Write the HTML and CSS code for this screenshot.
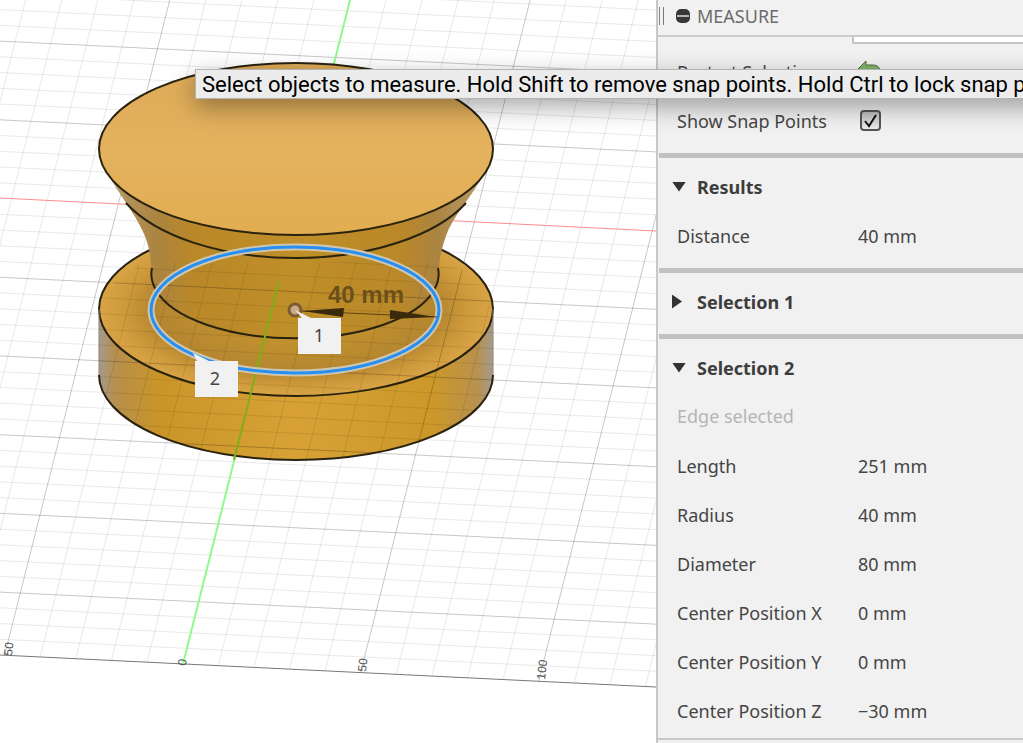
FILE: index.html
```html
<!DOCTYPE html>
<html lang="en">
<head>
    <meta charset="UTF-8">
    <meta name="viewport" content="width=device-width, initial-scale=1.0">
    <title>Measure</title>
    <link rel="stylesheet" href="styles.css">
</head>
<body>
    <main class="workspace">
        <svg class="canvas" viewBox="0 0 656 743" preserveAspectRatio="xMinYMin slice" role="img" aria-label="Model view">
            <defs>
                <linearGradient id="topFace" x1="0" y1="0" x2="0" y2="1">
                    <stop offset="0" stop-color="#dcaa57"/>
                    <stop offset="0.5" stop-color="#e4b25f"/>
                    <stop offset="1" stop-color="#e2ad50"/>
                </linearGradient>
                <linearGradient id="neck">
                    <stop offset="0" stop-color="#b59a68"/>
                    <stop offset="0.12" stop-color="#ab8440"/>
                    <stop offset="0.22" stop-color="#ba8828"/>
                    <stop offset="0.5" stop-color="#bf8f29"/>
                    <stop offset="0.78" stop-color="#ba8828"/>
                    <stop offset="0.88" stop-color="#ab8440"/>
                    <stop offset="1" stop-color="#b59a68"/>
                </linearGradient>
                <linearGradient id="side">
                    <stop offset="0" stop-color="#a59b8c"/>
                    <stop offset="0.04" stop-color="#b68f4e"/>
                    <stop offset="0.15" stop-color="#c99528"/>
                    <stop offset="0.5" stop-color="#d7a136"/>
                    <stop offset="0.85" stop-color="#cc982a"/>
                    <stop offset="0.96" stop-color="#b8914e"/>
                    <stop offset="1" stop-color="#a59b8c"/>
                </linearGradient>
                <radialGradient id="baseFace">
                    <stop offset="0.4" stop-color="#c0902e"/>
                    <stop offset="0.72" stop-color="#b48630"/>
                    <stop offset="0.88" stop-color="#cf9a3b"/>
                    <stop offset="1" stop-color="#d9a446"/>
                </radialGradient>
                <clipPath id="lowerBody">
                    <path d="M99 309V375A197 85 0 0 0 493 375V309C490 290 470 268 439 262H151C122 268 102 290 99 309Z"/>
                </clipPath>
            </defs>

            <g id="grid">
                <path class="minor"/>
                <path class="major"/>
            </g>
            <path class="edge-line" d="M0 655L656 687"/>
            <path class="axis-x" d="M0 198L656 231"/>
            <path class="axis-y" d="M183 664L350 0"/>

            <g class="ruler">
                <text transform="translate(12 656) rotate(-84)">50</text>
                <text transform="translate(186 666) rotate(-84)">0</text>
                <text transform="translate(366 672) rotate(-84)">50</text>
                <text transform="translate(545 680) rotate(-84)">100</text>
            </g>

            <!-- base disc -->
            <path fill="url(#side)" d="M99 309V375A197 85 0 0 0 493 375V309Z"/>
            <ellipse fill="url(#baseFace)" cx="296" cy="309" rx="197" ry="87"/>
            <path class="outline" d="M99 375A197 85 0 0 0 493 375"/>
            <path class="outline" d="M152 249C118 265 99 287 99 309A197 87 0 0 0 493 309C493 287 474 265 440 249"/>
            <path class="outline soft" d="M99 309V375M493 309V375"/>

            <!-- neck and flared top -->
            <path fill="url(#neck)" d="M112 181C124 201 143 225 148 245C151 256 151 266 152 275A143 63 0 0 0 438 275C439 262 441 250 446 236C452 218 468 201 480 181Z"/>
            <path class="outline" d="M152 268A143 63 0 0 0 156 290A143 63 0 0 0 434 290A143 63 0 0 0 438 268"/>
            <path class="outline" d="M126 203C156 236 221 258 296 258S437 235 466 203"/>
            <ellipse class="outline top" cx="296" cy="149" rx="197" ry="86"/>

            <!-- ground plane showing through the lower half -->
            <g clip-path="url(#lowerBody)">
                <use href="#grid"/>
            </g>
            <path class="axis-y through" d="M234 460L279 281"/>

            <!-- selected edge and dimension -->
            <ellipse class="edge-halo" cx="295" cy="310" rx="144" ry="63"/>
            <ellipse class="edge-selected" cx="295" cy="310" rx="144" ry="63"/>
            <g class="dimension">
                <path class="leader" d="M302 311L437 317"/>
                <path d="M302 311L344 308L343 317ZM390 310L436 317L390 319Z"/>
                <text x="328" y="303">40 mm</text>
            </g>
            <circle class="center-point" cx="295" cy="310" r="6"/>

            <g class="callout">
                <path d="M295 310L311 318H341V354H298V318H302Z"/>
                <text x="319" y="342">1</text>
            </g>
            <g class="callout">
                <path d="M193 353L209 361H238V397H195V361H197Z"/>
                <text x="215" y="385">2</text>
            </g>
        </svg>

        <aside class="panel">
            <header class="panel-header">
                <span class="grip"></span>
                <button class="collapse" aria-label="Collapse panel"></button>
                <h1>MEASURE</h1>
            </header>
            <div class="panel-body">
                <div class="options">
                    <div class="option scrolled">
                        <select aria-label="Precision"><option></option></select>
                    </div>
                    <div class="option">
                        <label for="restart">Restart Selection</label>
                        <button id="restart" class="restart" aria-label="Restart Selection">
                            <svg width="24" height="24" viewBox="0 0 24 24"><path d="M1 9L9 1V5H16Q23 5 23 12V21H17V14Q17 12 14 12H9V17Z"/></svg>
                        </button>
                    </div>
                    <div class="option">
                        <label for="snap">Show Snap Points</label>
                        <input id="snap" type="checkbox" checked>
                    </div>
                </div>

                <section>
                    <h2><button class="toggle open" aria-expanded="true">Results</button></h2>
                    <table>
                        <tr><th>Distance</th><td>40 mm</td></tr>
                    </table>
                </section>

                <section>
                    <h2><button class="toggle" aria-expanded="false">Selection 1</button></h2>
                </section>

                <section>
                    <h2><button class="toggle open" aria-expanded="true">Selection 2</button></h2>
                    <p class="hint">Edge selected</p>
                    <table>
                        <tr><th>Length</th><td>251 mm</td></tr>
                        <tr><th>Radius</th><td>40 mm</td></tr>
                        <tr><th>Diameter</th><td>80 mm</td></tr>
                        <tr><th>Center Position X</th><td>0 mm</td></tr>
                        <tr><th>Center Position Y</th><td>0 mm</td></tr>
                        <tr><th>Center Position Z</th><td>−30 mm</td></tr>
                    </table>
                </section>
                <div class="panel-end"></div>
            </div>
        </aside>

        <div class="tooltip" role="tooltip">Select objects to measure. Hold Shift to remove snap points. Hold Ctrl to lock snap points.</div>
    </main>

    <script>
        // Ground grid: one step along each axis, in canvas units
        const origin = [296.3, 213];
        const u = [35.6, 1.74];
        const v = [-3.92, 15.55];
        const lastRow = 29;

        function point(a, b) {
            const x = origin[0] + a * u[0] + b * v[0];
            const y = origin[1] + a * u[1] + b * v[1];
            return x.toFixed(1) + " " + y.toFixed(1);
        }

        let minor = "";
        let major = "";
        for (let i = -12; i <= 16; i++) {
            const line = "M" + point(i, -16) + "L" + point(i, lastRow);
            if (i % 5 === 0) {
                if (i !== 0) major += line;
            } else {
                minor += line;
            }
        }
        for (let j = -16; j < lastRow; j++) {
            const line = "M" + point(-12, j) + "L" + point(16, j);
            if (j % 5 === 0) {
                if (j !== 0) major += line;
            } else {
                minor += line;
            }
        }
        document.querySelector("#grid .minor").setAttribute("d", minor);
        document.querySelector("#grid .major").setAttribute("d", major);
    </script>
</body>
</html>
```
FILE: styles.css
```css
* {
    box-sizing: border-box;
}
body {
    margin: 0;
    font-family: "Noto Sans", "Open Sans", sans-serif;
    font-size: 18px;
    color: #454545;
    background-color: white;
}
h1, h2, p {
    margin: 0;
    font-size: 18px;
    font-weight: normal;
}
button {
    padding: 0;
    border: none;
    background: none;
    font: inherit;
    color: inherit;
}
.workspace {
    position: relative;
    display: grid;
    grid-template-columns: minmax(0, 1fr) 367px;
    height: 100vh;
    overflow: hidden;
}

/* model view */
.canvas {
    width: 100%;
    height: 100%;
}
.minor, .major, .edge-line, .axis-x, .axis-y, .leader {
    fill: none;
    stroke-width: 1;
}
.minor { stroke: rgba(0, 0, 0, 0.09); }
.major { stroke: rgba(0, 0, 0, 0.22); }
.edge-line { stroke: #777; }
.axis-x { stroke: #ff8c8c; }
.axis-y { stroke: #8dfa8d; stroke-width: 2; }
.axis-y.through { stroke: #7fae16; }
.ruler text {
    font: 12px "Liberation Sans", sans-serif;
    fill: #555;
}
.outline {
    fill: none;
    stroke: #29220f;
    stroke-width: 2;
}
.outline.top {
    fill: url(#topFace);
}
.outline.soft {
    stroke: #8b8374;
    stroke-width: 1;
}
.edge-halo {
    fill: none;
    stroke: #cfc5ad;
    stroke-width: 7;
}
.edge-selected {
    fill: none;
    stroke: #2490f5;
    stroke-width: 3;
}
.dimension path { fill: #3a2a0c; }
.dimension .leader { stroke: #5c4413; }
.dimension text {
    font: bold 24px "Liberation Sans", sans-serif;
    fill: #6b5019;
}
.center-point {
    fill: #c9a987;
    stroke: #7b5c31;
    stroke-width: 3;
}
.callout path { fill: #f1f1f1; }
.callout text {
    font-size: 18px;
    fill: #454545;
    text-anchor: middle;
}

/* measure panel */
.panel {
    display: flex;
    flex-direction: column;
    min-height: 0;
    border-left: 2px solid #c8c8c8;
    background-color: #f1f1f1;
}
.panel-header {
    display: flex;
    align-items: center;
    flex: none;
    height: 37px;
    padding: 0 0 4px 1px;
    border-bottom: 2px solid #cbcbcb;
    color: #6b6b6b;
}
.grip {
    width: 5px;
    height: 18px;
    border-left: 1px solid #888;
    border-right: 1px solid #777;
}
.collapse {
    display: flex;
    align-items: center;
    justify-content: center;
    width: 14px;
    height: 14px;
    margin: 0 7px 0 12px;
    border-radius: 5px;
    background-color: #383838;
}
.collapse::before {
    content: "";
    width: 12px;
    height: 2px;
    background-color: #b5b5b5;
}
.panel-body {
    flex: 1;
    min-height: 0;
    overflow: hidden;
    padding-left: 1px;
}
.options {
    padding-bottom: 8px;
}
.option {
    display: flex;
    align-items: center;
    height: 49px;
    padding-left: 18px;
}
.option label {
    width: 183px;
}
.option.scrolled {
    margin-top: -39px;
    padding-left: 193px;
}
.option select {
    flex: 1;
    height: 43px;
    border: 2px solid #c4c4c4;
    border-right: none;
    appearance: none;
    background-color: white;
}
.restart {
    height: 24px;
    margin-left: -3px;
}
.restart path {
    fill: #82b366;
    stroke: #4d6b3d;
}
.option input {
    width: 21px;
    height: 21px;
    margin: 0;
    appearance: none;
    border: 2px solid #555;
    border-radius: 4px;
    background: url("data:image/svg+xml,%3Csvg xmlns='http://www.w3.org/2000/svg' viewBox='0 0 17 17'%3E%3Cpath d='M3 9L7 14L14 3' fill='none' stroke='%23111' stroke-width='2'/%3E%3C/svg%3E"), linear-gradient(#bbb, #ececec);
}
section {
    padding: 4px 0 8px;
    border-top: 5px solid #c1c1c1;
}
.toggle {
    display: flex;
    align-items: center;
    width: 100%;
    height: 49px;
    padding-left: 13px;
    font-weight: bold;
    color: #3d3d3d;
}
.toggle::before {
    content: "";
    width: 10px;
    height: 14px;
    margin-right: 15px;
    background-color: #333;
    clip-path: polygon(0 0, 100% 50%, 0 100%);
}
.toggle.open::before {
    width: 14px;
    height: 10px;
    margin-right: 11px;
    clip-path: polygon(0 0, 100% 0, 50% 100%);
}
table {
    width: 100%;
    border-collapse: collapse;
}
th, td {
    height: 49px;
    padding: 0;
    text-align: left;
    font-weight: normal;
}
th {
    width: 199px;
    padding-left: 18px;
}
.hint {
    padding-left: 18px;
    line-height: 49px;
    color: #b5b5b5;
}
.panel-end {
    height: 6px;
    margin-left: -1px;
    margin-top: -5px;
    border-top: 2px solid #c8c8c8;
}

/* command hint, floats over view and panel */
.tooltip {
    position: absolute;
    top: 69px;
    left: 195px;
    height: 30px;
    padding-left: 6px;
    border: 1px solid #b3b3b3;
    background-color: #ececec;
    box-shadow: 0 8px 24px rgba(0, 0, 0, 0.35);
    font-family: Roboto, "Liberation Sans", sans-serif;
    font-size: 22px;
    line-height: 30px;
    white-space: nowrap;
    color: black;
}
```
